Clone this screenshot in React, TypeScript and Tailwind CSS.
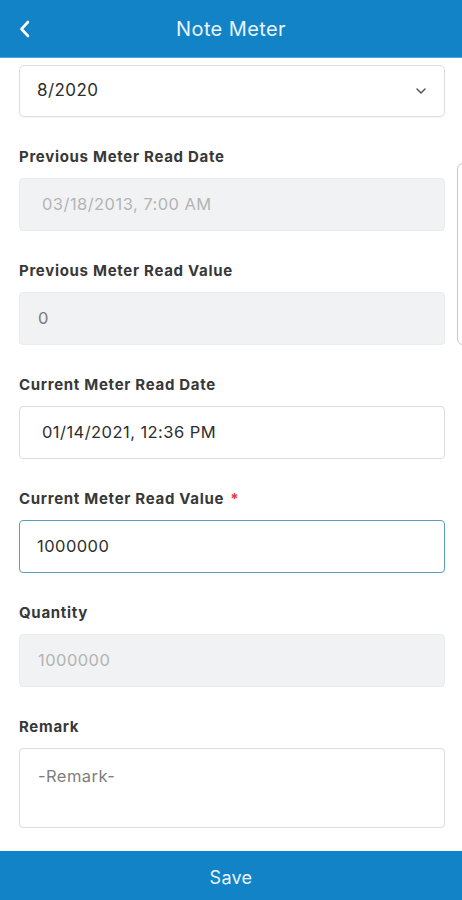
import React from "react";

const font = { fontFamily: "Inter, 'Noto Sans', sans-serif" };

function Label({ children, required }: { children: React.ReactNode; required?: boolean }) {
  return (
    <div className="h-[20px] leading-[20px] text-[15px] font-bold text-[#383838] tracking-[0.7px]">
      {children}
      {required && <span className="text-[#e53935] ml-[6px]">*</span>}
    </div>
  );
}

export default function App() {
  return (
    <div className="w-[462px] h-[900px] flex flex-col bg-white relative overflow-hidden" style={font}>
      <header className="h-[58px] bg-[#1283c6] flex items-center relative shrink-0 border-b border-[#4aa3d8]">
        <div className="w-[50px] pl-[18px] flex items-center">
          <svg width="14" height="18" viewBox="0 0 14 18" fill="none">
            <path d="M10 2 L3.5 9 L10 16" stroke="#ffffff" strokeWidth="2.6" strokeLinecap="round" strokeLinejoin="round" />
          </svg>
        </div>
        <div className="flex-1 text-center text-[20px] text-[#eaf5fc] font-normal tracking-[0.4px] pr-[50px]">Note Meter</div>
      </header>

      <main className="flex-1 flex flex-col pl-[19px] pr-[17px] pt-[7px] text-[16.5px] tracking-[0.45px]">
        <div className="h-[52px] border border-[#dedede] rounded-[5px] flex items-center justify-between pl-[17px] pr-[17px] shadow-[0_1px_1px_rgba(0,0,0,0.04)]">
          <span className="text-[17px] text-[#2e2e2e]">8/2020</span>
          <svg width="12" height="8" viewBox="0 0 12 8" fill="none">
            <path d="M2 2 L6 6 L10 2" stroke="#555" strokeWidth="1.5" strokeLinecap="round" strokeLinejoin="round" />
          </svg>
        </div>

        <div className="mt-[30px] flex flex-col gap-[11px]">
          <Label>Previous Meter Read Date</Label>
          <div className="h-[53px] bg-[#f1f2f3] border border-[#eaebec] rounded-[4px] flex items-center pl-[22px] text-[#b4b4b4]">
            03/18/2013, 7:00 AM
          </div>
        </div>

        <div className="mt-[30px] flex flex-col gap-[11px]">
          <Label>Previous Meter Read Value</Label>
          <div className="h-[53px] bg-[#f1f2f3] border border-[#eaebec] rounded-[4px] flex items-center pl-[18px] text-[#7a7a7a]">
            0
          </div>
        </div>

        <div className="mt-[30px] flex flex-col gap-[11px]">
          <Label>Current Meter Read Date</Label>
          <div className="h-[53px] bg-white border border-[#dcdcdc] rounded-[4px] flex items-center pl-[22px] text-[#2e2e2e]">
            01/14/2021, 12:36 PM
          </div>
        </div>

        <div className="mt-[30px] flex flex-col gap-[11px]">
          <Label required>Current Meter Read Value</Label>
          <div className="h-[53px] bg-white border-[1.5px] border-[#5a9cc2] rounded-[4px] flex items-center pl-[17px] text-[#2e2e2e]">
            1000000
          </div>
        </div>

        <div className="mt-[30px] flex flex-col gap-[11px]">
          <Label>Quantity</Label>
          <div className="h-[53px] bg-[#f1f2f3] border border-[#eaebec] rounded-[4px] flex items-center pl-[18px] text-[#b4b4b4]">
            1000000
          </div>
        </div>

        <div className="mt-[30px] flex flex-col gap-[11px]">
          <Label>Remark</Label>
          <div className="h-[80px] bg-white border border-[#dcdcdc] rounded-[4px] pl-[18px] pt-[17px] text-[#7e7e7e] leading-[20px]">
            -Remark-
          </div>
        </div>
      </main>

      <footer className="h-[49px] shrink-0 bg-[#1283c6] flex items-center justify-center pt-[3px] text-[18px] tracking-[0.3px] text-[#eaf5fc]">
        Save
      </footer>

      <div className="absolute left-[457px] top-[163px] w-[20px] h-[182px] border border-[#c8c8c8] rounded-[6px]" />
    </div>
  );
}
